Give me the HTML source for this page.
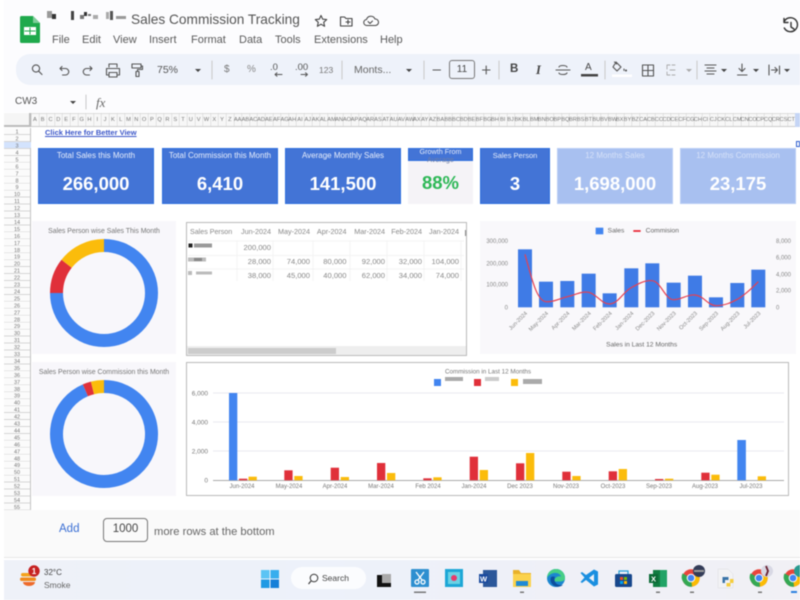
<!DOCTYPE html>
<html><head><meta charset="utf-8"><title>Sales Commission Tracking</title>
<style>
html,body{margin:0;padding:0;background:#fff;width:800px;height:600px;overflow:hidden}
#r{position:absolute;left:0;top:0;width:800px;height:600px;overflow:hidden;font-family:"Liberation Sans",sans-serif;color:#444;filter:blur(.5px);background:#fff}
#r div,#r span.a{position:absolute}
.t{white-space:nowrap;line-height:1}
.m{top:34.500px;font-size:11px;color:#5a5a5a}
.card{background:#4374d6;border:1px solid #2f6fde;box-sizing:border-box;top:148px;height:56px;color:#e8eefb;text-align:center}
.card b{position:absolute;left:0;right:0;top:25px;font-size:18.500px;line-height:20px;color:#fff}
.card span{position:absolute;left:0;right:0;top:2px;font-size:8px;line-height:10px;white-space:nowrap}
.lt{background:#a8c0f0;border-color:#b8cdf5;color:#d6e1f8}
#cols{left:31px;top:113px;width:769px;height:14px;overflow:hidden;display:flex;font-size:5.700px;line-height:14px;color:#777;
 background:repeating-linear-gradient(90deg,#d0d0d0 0,#d0d0d0 .5px,transparent .5px,transparent 7.800px)}
#cols i{font-style:normal;flex:0 0 7.800px;width:7.800px;text-align:center;white-space:nowrap}
svg{position:absolute;left:0;top:0}
</style></head><body><div id="r">
<div style="left:4px;top:0;width:796px;height:112px;background:#fcfcfe"></div>
<div style="left:16px;top:54px;width:784px;height:31px;background:#eef2fa;border-radius:14px 0 0 14px"></div>
<div class="t" style="left:131px;top:13px;font-size:13.700px;color:#555">Sales Commission Tracking</div>
<div class="t m" style="left:52px">File</div><div class="t m" style="left:82px">Edit</div><div class="t m" style="left:113px">View</div><div class="t m" style="left:149px">Insert</div><div class="t m" style="left:191px">Format</div><div class="t m" style="left:239px">Data</div><div class="t m" style="left:275px">Tools</div><div class="t m" style="left:314px">Extensions</div><div class="t m" style="left:380px">Help</div>
<div class="t" style="left:157px;top:65px;font-size:10.500px;color:#555">75%</div>
<div class="t" style="left:224px;top:65px;font-size:10px;color:#777">$</div>
<div class="t" style="left:247px;top:65px;font-size:10px;color:#888">%</div>
<div class="t" style="left:270px;top:63px;font-size:9.500px;color:#555">.0</div>
<div class="t" style="left:295px;top:63px;font-size:9.500px;color:#555">.00</div>
<div class="t" style="left:319px;top:66px;font-size:8.500px;color:#777">123</div>
<div class="t" style="left:354px;top:65px;font-size:10.500px;color:#666">Monts...</div>
<div class="t" style="left:449px;top:60px;width:24px;height:17px;border:1px solid #777;border-radius:3px;font-size:10px;line-height:17px;text-align:center;color:#444">11</div>
<div class="t" style="left:510px;top:64px;font-size:11.500px;font-weight:bold;color:#444">B</div>
<div class="t" style="left:536px;top:63.500px;font-size:12.500px;font-style:italic;font-family:'Liberation Serif',serif;font-weight:bold;color:#444">I</div>
<div class="t" style="left:585px;top:63px;font-size:10px;color:#444">A</div>
<div class="t" style="left:15px;top:97px;font-size:10px;color:#555">CW3</div>
<div class="t" style="left:96px;top:96px;font-size:13px;font-style:italic;font-family:'Liberation Serif',serif;color:#666">fx</div>

<div style="left:4px;top:113px;width:796px;height:14px;background:#f7f7f7;border-top:1px solid #ddd;border-bottom:1px solid #ccc;box-sizing:border-box"></div>
<div style="left:4px;top:113px;width:27px;height:14px;border-right:2px solid #bbb;border-bottom:2px solid #bbb;box-sizing:border-box;background:#f5f5f5"></div>
<div id="cols"><i>A</i><i>B</i><i>C</i><i>D</i><i>E</i><i>F</i><i>G</i><i>H</i><i>I</i><i>J</i><i>K</i><i>L</i><i>M</i><i>N</i><i>O</i><i>P</i><i>Q</i><i>R</i><i>S</i><i>T</i><i>U</i><i>V</i><i>W</i><i>X</i><i>Y</i><i>Z</i><i>AA</i><i>AB</i><i>AC</i><i>AD</i><i>AE</i><i>AF</i><i>AG</i><i>AH</i><i>AI</i><i>AJ</i><i>AK</i><i>AL</i><i>AM</i><i>AN</i><i>AO</i><i>AP</i><i>AQ</i><i>AR</i><i>AS</i><i>AT</i><i>AU</i><i>AV</i><i>AW</i><i>AX</i><i>AY</i><i>AZ</i><i>BA</i><i>BB</i><i>BC</i><i>BD</i><i>BE</i><i>BF</i><i>BG</i><i>BH</i><i>BI</i><i>BJ</i><i>BK</i><i>BL</i><i>BM</i><i>BN</i><i>BO</i><i>BP</i><i>BQ</i><i>BR</i><i>BS</i><i>BT</i><i>BU</i><i>BV</i><i>BW</i><i>BX</i><i>BY</i><i>BZ</i><i>CA</i><i>CB</i><i>CC</i><i>CD</i><i>CE</i><i>CF</i><i>CG</i><i>CH</i><i>CI</i><i>CJ</i><i>CK</i><i>CL</i><i>CM</i><i>CN</i><i>CO</i><i>CP</i><i>CQ</i><i>CR</i><i>CS</i><i>CT</i><i>CU</i><i>CV</i><i>CW</i></div>
<div style="left:795px;top:113px;width:5px;height:14px;background:#c5d5f5"></div>
<div style="left:4px;top:128px;width:27px;height:382px;background:repeating-linear-gradient(180deg,#fbfbfb 0,#fbfbfb 6.200px,#d6d6d6 6.200px,#d6d6d6 6.950px);border-right:1px solid #c4c4c4;box-sizing:border-box"></div>
<div style="left:4px;top:142px;width:27px;height:6px;background:#d3e3fd"></div>
<div class="t" style="left:45px;top:129px;font-size:7.500px;font-weight:bold;color:#3a55c8;text-decoration:underline">Click Here for Better View</div>
<div style="left:796px;top:141px;width:4px;height:6px;border:1px solid #2f5fd0;box-sizing:border-box"></div>

<div class="card" style="left:38px;width:116px"><span>Total Sales this Month</span><b>266,000</b></div>
<div class="card" style="left:162px;width:116px"><span>Total Commission this Month</span><b>6,410</b></div>
<div class="card" style="left:285px;width:116px"><span>Average Monthly Sales</span><b>141,500</b></div>
<div style="left:408px;top:148px;width:65px;height:56px;background:#f5f3f7"></div>
<div style="left:408px;top:148px;width:65px;height:13px;background:#4374d6;border:1px solid #2f6fde;box-sizing:border-box"></div>
<div style="left:408px;top:147.500px;width:65px;text-align:center;font-size:7.200px;line-height:8.500px;color:#e6ecfa">Growth From<br><span style="color:#6f7fa8">Average</span></div>
<div class="t" style="left:408px;top:174px;width:65px;text-align:center;font-size:18.500px;font-weight:bold;color:#2eb857">88%</div>
<div class="card" style="left:480px;width:70px"><span style="font-size:7.500px">Sales Person</span><b>3</b></div>
<div class="card lt" style="left:557px;width:116px"><span>12 Months Sales</span><b>1,698,000</b></div>
<div class="card lt" style="left:680px;width:116px"><span>12 Months Commission</span><b>23,175</b></div>

<div style="left:32px;top:221px;width:144px;height:133px;background:#f8f7fb"></div>
<div style="left:32px;top:362px;width:144px;height:134px;background:#f8f7fb"></div>
<div style="left:480px;top:221px;width:316px;height:133px;background:#f9f8fb"></div>
<div style="left:186px;top:222px;width:281px;height:134px;border:1px solid #bbb;box-sizing:border-box;background:#fff"></div>
<div style="left:186px;top:362px;width:603px;height:134px;border:1px solid #bbb;box-sizing:border-box;background:#fff"></div>

<div style="left:4px;top:510px;width:796px;height:47px;background:#fafafa;border-bottom:1px solid #e6e6e6"></div>
<div class="t" style="left:59px;top:524px;font-size:11.500px;color:#3b6fd4">Add</div>
<div class="t" style="left:103px;top:518px;width:45px;height:24px;border:1px solid #777;border-radius:4px;box-sizing:border-box;text-align:center;font-size:11.500px;line-height:21px;color:#444">1000</div>
<div class="t" style="left:154px;top:527px;font-size:11.200px;color:#666">more rows at the bottom</div>

<div style="left:4px;top:560px;width:796px;height:40px;background:linear-gradient(90deg,#eef1f8,#edf1fa 40%,#f1f0f5)"></div>
<div class="t" style="left:44px;top:569px;font-size:8px;color:#444">32°C</div>
<div class="t" style="left:44px;top:581px;font-size:8.500px;color:#666">Smoke</div>
<div style="left:291px;top:567px;width:75px;height:22px;border-radius:11px;background:#fbfcfe"></div>
<div class="t" style="left:322px;top:574px;font-size:8.500px;color:#444">Search</div>

<svg width="800" height="600" viewBox="0 0 800 600">
<!-- sheets logo -->
<path d="M20 17.500a1.500 1.500 0 0 1 1.500-1.500H33l7 7v18.500a1.500 1.500 0 0 1-1.500 1.500h-17a1.500 1.500 0 0 1-1.500-1.500z" fill="#1fa94c"/>
<path d="M33 16l7 7h-7z" fill="#7fce9a"/>
<rect x="24" y="27" width="12" height="8" fill="#fff"/><path d="M24.500 31h11M30 27.500v7" stroke="#1fa94c" stroke-width="1"/>
<g fill="#777"><rect x="47" y="11" width="5" height="7" fill="#999"/><rect x="52" y="14" width="4" height="5" fill="#333"/><rect x="71" y="11" width="3" height="9" fill="#444"/><rect x="80" y="15" width="4" height="4"/><rect x="84" y="12" width="3" height="4" fill="#333"/><rect x="88" y="14" width="3" height="2"/><rect x="93" y="15" width="5" height="4" fill="#aaa"/><rect x="106" y="12" width="3" height="7" fill="#aaa"/><rect x="110" y="11" width="3" height="9" fill="#555"/><rect x="116" y="16" width="10" height="3" fill="#999"/></g>
<!-- title icons -->
<g fill="none" stroke="#444" stroke-width="1.100" stroke-linejoin="round" stroke-linecap="round">
<path d="M321 15.500l1.700 3.700 4 .4-3 2.700.9 4-3.600-2.100-3.600 2.100.9-4-3-2.700 4-.4z"/>
<path d="M340.500 17h4l1.500 1.500h6v7.500h-11.500zM346 22h4M348 20v4"/>
<path d="M367 25.500a3 3 0 0 1-.5-6 4.500 4.500 0 0 1 8.500-.5 3.200 3.200 0 0 1 .5 6.500zM368 21.500l2 2 2.500-2.500" stroke-width="1"/>
<path d="M784 22a7 7 0 1 1 .3 6M784 18.500v4h4M791 22.500v4.500l3 2" stroke="#333" stroke-width="1.400"/>
</g>
<!-- toolbar icons -->
<g fill="none" stroke="#555" stroke-width="1.100" stroke-linecap="round" stroke-linejoin="round">
<circle cx="36" cy="68.500" r="3.600"/><path d="M38.700 71.200l3.300 3.300"/>
<path d="M60 68.500h5.500a3 3 0 0 1 0 6.500h-3M60 68.500l2-2M60 68.500l2 2"/>
<path d="M92 68.500h-5.500a3 3 0 0 0 0 6.500h3M92 68.500l-2-2M92 68.500l-2 2"/>
<path d="M109 67v-3h8v3M108 75h-1.500v-6.500h13V75H118M109 72.500h8v4.500h-8z"/>
<path d="M132 64h9v4h-9zM141 66h1.500v3.500h-5v2M136 71.500h3v5h-3z"/>
<path d="M424 61v18M212 61v18M342 61v18M499 61v18M605 61v18M697 61v18" stroke="#ccc"/>
<path d="M433 70h7.500M482.500 70h7.500M486.200 66v8"/>
<path d="M275 74.500h7M277 72.800l-2 1.700 2 1.700M301 74.500h6.500M305.500 72.800l2 1.700-2 1.700" stroke-width="1"/>
<path d="M556 70h14M559 67c.5-2 7-2 8 0M559 73c.5 2 7 2 8 0"/>
<path d="M616 62l5 5-4 4-4-4zM614.500 62l2 2M624 69v1.500"/>
<path d="M642.500 65h11v11h-11zM642.500 70.500h11M648 65v11"/>
<path d="M667 65h3m2 0h3M667 75h3m2 0h3M667 65v4M667 72v3M670 70h5" stroke="#aaa" stroke-width=".9"/>
<path d="M705 65h11M707 68h7M705 71h11M707 74h7" stroke-width="1.100"/>
<path d="M742 64v7M739 68.500l3 3 3-3M737.500 75h9.500"/>
<path d="M769 65v10M771.500 70h6M775 67.500l2.500 2.500-2.500 2.500M779.500 66v8"/>
<path d="M86 95v14" stroke="#ccc"/>
</g>
<rect x="581" y="74" width="17" height="2.500" fill="#444"/>
<rect x="612" y="74.500" width="20" height="2.500" fill="#fff"/>
<g fill="#444"><path d="M195 69h6l-3 3zM406 69h6l-3 3zM70 101h6l-3 3zM721 69h6l-3 3zM753 69h6l-3 3zM784 69h6l-3 3z"/><path d="M686 69h6l-3 3z" fill="#aaa"/><circle cx="626" cy="70.500" r="1"/></g>

<!-- row numbers -->
<g font-size="5.500" fill="#777" text-anchor="middle" transform="translate(17,2)">
<text y="131.600">1</text><text y="138.600">2</text><text y="145.500">3</text><text y="152.500">4</text><text y="159.400">5</text><text y="166.400">6</text><text y="173.300">7</text><text y="180.300">8</text><text y="187.200">9</text><text y="194.200">10</text><text y="201.100">11</text><text y="208.100">12</text><text y="215">13</text><text y="222">14</text><text y="228.900">15</text><text y="235.900">16</text><text y="242.800">17</text><text y="249.800">18</text><text y="256.700">19</text><text y="263.700">20</text><text y="270.600">21</text><text y="277.600">22</text><text y="284.500">23</text><text y="291.500">24</text><text y="298.400">25</text><text y="305.400">26</text><text y="312.300">27</text><text y="319.300">28</text><text y="326.200">29</text><text y="333.200">30</text><text y="340.100">31</text><text y="347.100">32</text><text y="354">33</text><text y="361">34</text><text y="367.900">35</text><text y="374.900">36</text><text y="381.800">37</text><text y="388.800">38</text><text y="395.700">39</text><text y="402.700">40</text><text y="409.600">41</text><text y="416.600">42</text><text y="423.500">43</text><text y="430.500">44</text><text y="437.400">45</text><text y="444.400">46</text><text y="451.300">47</text><text y="458.300">48</text><text y="465.200">49</text><text y="472.200">50</text><text y="479.100">51</text><text y="486.100">52</text><text y="493">53</text><text y="500">54</text><text y="506.900">55</text>
</g>

<!-- donut 1 -->
<text x="104" y="233" font-size="6.900" fill="#777" text-anchor="middle">Sales Person wise Sales This Month</text>
<g fill="none" stroke-width="13">
<path d="M104 245.500A47.500 47.500 0 1 1 56.500 293" stroke="#4285f0"/>
<path d="M56.500 293A47.500 47.500 0 0 1 66.600 263.800" stroke="#e0303a"/>
<path d="M66.600 263.800A47.500 47.500 0 0 1 104 245.500" stroke="#fbbc0b"/>
</g>
<!-- donut 2 -->
<text x="104" y="374" font-size="6.900" fill="#777" text-anchor="middle">Sales Person wise Commission this Month</text>
<g fill="none" stroke-width="13">
<path d="M104 386.500A47.500 47.500 0 1 1 85.400 390.300" stroke="#4285f0"/>
<path d="M85.400 390.300A47.500 47.500 0 0 1 92.500 387.900" stroke="#e0303a"/>
<path d="M92.500 387.900A47.500 47.500 0 0 1 104 386.500" stroke="#fbbc0b"/>
</g>

<!-- table -->
<g stroke="#f0f0f0" stroke-width=".7">
<path d="M188 241H464M188 255.500H464M188 269H464M237 241V281M273 241V281M313 241V281M350 241V281M387 241V281M424 241V281M461 241V281"/>
</g>
<g font-size="7.600" fill="#888">
<text x="190" y="234" font-size="7.100">Sales Person</text>
<g text-anchor="end"><text x="271" y="234" font-size="7.200">Jun-2024</text><text x="310" y="234" font-size="7.200">May-2024</text><text x="346.500" y="234" font-size="7.200">Apr-2024</text><text x="385" y="234" font-size="7.200">Mar-2024</text><text x="422" y="234" font-size="7.200">Feb-2024</text><text x="459" y="234" font-size="7.200">Jan-2024</text>
<text x="271" y="250">200,000</text>
<text x="271" y="264">28,000</text><text x="310" y="264">74,000</text><text x="346.500" y="264">80,000</text><text x="385" y="264">92,000</text><text x="422" y="264">32,000</text><text x="459" y="264">104,000</text>
<text x="271" y="278">38,000</text><text x="310" y="278">45,000</text><text x="346.500" y="278">40,000</text><text x="385" y="278">62,000</text><text x="422" y="278">34,000</text><text x="459" y="278">74,000</text></g>
</g>
<rect x="465" y="230" width="1" height="6" fill="#888"/>
<rect x="188.500" y="243.500" width="4" height="4" fill="#222"/><rect x="194" y="243.500" width="18" height="4" fill="#999"/>
<rect x="188" y="257.500" width="18" height="4" fill="#bbb"/><rect x="194" y="258" width="8" height="3" fill="#888"/>
<rect x="188" y="271" width="4" height="4" fill="#bbb"/><rect x="196" y="271.500" width="16" height="3" fill="#bbb"/>
<rect x="187" y="346" width="279" height="9" fill="#eee"/><rect x="188" y="348" width="148" height="6" fill="#ccc"/>

<!-- combo chart -->
<g transform="translate(475,215) scale(.3333)">
<rect x="362" y="38" width="23" height="20" fill="#4285f0"/>
<path d="M475 48h22" stroke="#e81c2c" stroke-width="5"/>
<g font-size="20" fill="#666"><text x="398" y="53">Sales</text><text x="512" y="53">Commision</text></g>
<g fill="#3f7be6">
<rect x="129" y="103" width="42" height="174"/><rect x="192" y="200" width="42" height="77"/><rect x="256" y="198" width="42" height="79"/><rect x="320" y="176" width="42" height="101"/><rect x="383" y="235" width="42" height="42"/><rect x="448" y="160" width="42" height="117"/><rect x="511" y="145" width="42" height="132"/><rect x="575" y="203" width="42" height="74"/><rect x="639" y="182" width="42" height="95"/><rect x="702" y="247" width="42" height="30"/><rect x="766" y="204" width="42" height="73"/><rect x="829" y="164" width="42" height="113"/>
</g>
<path d="M150 118C170 190,185 258,213 260C235 262,255 250,277 245C300 240,320 228,341 232C365 237,380 268,404 267C430 266,445 230,469 218C490 206,510 195,532 197C558 200,570 254,596 254C620 254,635 238,660 240C685 242,700 272,723 272C750 272,770 262,787 253C810 240,830 220,850 200" fill="none" stroke="#e8404f" stroke-width="3.500"/>
<g font-size="18" fill="#888" text-anchor="end"><text x="99" y="84">300,000</text><text x="99" y="151">200,000</text><text x="99" y="215">100,000</text><text x="99" y="283">0</text></g>
<g font-size="18" fill="#888"><text x="903" y="84">8,000</text><text x="903" y="134">6,000</text><text x="903" y="184">4,000</text><text x="903" y="233">2,000</text><text x="903" y="283">0</text></g>
<g font-size="17" fill="#888" text-anchor="end">
<text transform="translate(158,296) rotate(-45)">Jun-2024</text><text transform="translate(221,296) rotate(-45)">May-2024</text><text transform="translate(285,296) rotate(-45)">Apr-2024</text><text transform="translate(349,296) rotate(-45)">Mar-2024</text><text transform="translate(412,296) rotate(-45)">Feb-2024</text><text transform="translate(477,296) rotate(-45)">Jan-2024</text><text transform="translate(540,296) rotate(-45)">Dec-2023</text><text transform="translate(604,296) rotate(-45)">Nov-2023</text><text transform="translate(668,296) rotate(-45)">Oct-2023</text><text transform="translate(731,296) rotate(-45)">Sep-2023</text><text transform="translate(795,296) rotate(-45)">Aug-2023</text><text transform="translate(858,296) rotate(-45)">Jul-2023</text>
</g>
<text x="500" y="394" font-size="20" fill="#666" text-anchor="middle">Sales in Last 12 Months</text>
</g>

<!-- commission chart -->
<path d="M213 393H784M213 422H784M213 451H784" stroke="#e9e9ef" stroke-width="1"/>
<path d="M213 480.500H784" stroke="#aaa" stroke-width="1"/>
<g font-size="6.500" fill="#777" text-anchor="end"><text x="208" y="395.500">6,000</text><text x="208" y="424.500">4,000</text><text x="208" y="453.500">2,000</text><text x="208" y="482.500">0</text></g>
<text x="488" y="373.500" font-size="6.300" fill="#777" text-anchor="middle">Commission in Last 12 Months</text>
<rect x="434" y="379" width="7" height="7" fill="#4285f0"/><rect x="474" y="379" width="7" height="7" fill="#e0303a"/><rect x="511" y="379" width="7" height="7" fill="#fbbc0b"/>
<rect x="445" y="377" width="18" height="4" fill="#aaa"/><rect x="485" y="377" width="14" height="4" fill="#ccc"/><rect x="523" y="379" width="19" height="5" fill="#aaa"/>
<g fill="#4285f0"><rect x="229" y="393" width="8.300" height="87.300"/><rect x="737.300" y="440" width="8.600" height="40.300"/></g>
<g fill="#e0303a">
<rect x="239" y="478.700" width="8.300" height="1.600"/><rect x="284.300" y="470.300" width="8.300" height="10"/><rect x="330.700" y="467.700" width="8.300" height="12.600"/><rect x="377" y="463" width="8.300" height="17.300"/><rect x="423.300" y="478.300" width="8.300" height="2"/><rect x="469.700" y="456.700" width="8.300" height="23.600"/><rect x="516" y="463.300" width="8.300" height="17"/><rect x="562.300" y="471.700" width="8.300" height="8.600"/><rect x="608.700" y="471.300" width="8.300" height="9"/><rect x="655" y="479" width="8.300" height="1.300"/><rect x="701.300" y="472.700" width="8.300" height="7.600"/>
</g>
<g fill="#fbbc0b">
<rect x="248.500" y="476.700" width="8.300" height="3.600"/><rect x="294.300" y="476" width="8.300" height="4.300"/><rect x="340.700" y="477" width="8.300" height="3.300"/><rect x="387" y="473" width="8.300" height="7.300"/><rect x="433.300" y="477.300" width="8.300" height="3"/><rect x="479.700" y="470" width="8.300" height="10.300"/><rect x="526" y="453" width="8.300" height="27.300"/><rect x="572.300" y="476" width="8.300" height="4.300"/><rect x="618.700" y="469" width="8.300" height="11.300"/><rect x="665" y="478.700" width="8.300" height="1.600"/><rect x="711.300" y="474.700" width="8.300" height="5.600"/><rect x="757.700" y="476.300" width="8.300" height="4"/>
</g>
<g font-size="6" fill="#777" text-anchor="middle">
<text x="242" y="488">Jun-2024</text><text x="289" y="488">May-2024</text><text x="335" y="488">Apr-2024</text><text x="381" y="488">Mar-2024</text><text x="428" y="488">Feb 2024</text><text x="474" y="488">Jan-2024</text><text x="520" y="488">Dec 2023</text><text x="566" y="488">Nov-2023</text><text x="613" y="488">Oct-2023</text><text x="659" y="488">Sep-2023</text><text x="705" y="488">Aug-2023</text><text x="751" y="488">Jul-2023</text>
</g>

<!-- taskbar -->
<g fill="#f4a21c"><rect x="21" y="573" width="15" height="3.500" rx="1.700"/><rect x="20" y="577.500" width="16" height="3.500" rx="1.700" fill="#f08a1c"/><path d="M23 582h12a6 4 0 0 1-12 0z" fill="#ee6a2a"/></g>
<circle cx="34" cy="571" r="5.700" fill="#c62222"/><text x="34" y="573.800" font-size="8" font-weight="bold" fill="#fff" text-anchor="middle">1</text>
<g><rect x="261" y="570" width="8.500" height="8.500" fill="#5cc4f4"/><rect x="270.500" y="570" width="8.500" height="8.500" fill="#38aeee"/><rect x="261" y="579.500" width="8.500" height="8.500" fill="#1f9ae4"/><rect x="270.500" y="579.500" width="8.500" height="8.500" fill="#1680d8"/></g>
<circle cx="314" cy="578" r="3.800" fill="none" stroke="#333" stroke-width="1"/><path d="M311 581l-2.500 3" stroke="#333" stroke-width="1.100"/>
<rect x="377" y="575" width="14" height="12" fill="#111"/><rect x="382" y="574" width="9" height="9" fill="#aaa"/>

<rect x="411" y="569" width="18" height="18" rx="1" fill="#2e8fd0"/>
<g fill="none" stroke="#fff" stroke-width="1.300"><path d="M416 572l6 8M424 572l-6 8"/><circle cx="417" cy="582" r="2"/><circle cx="423" cy="582" r="2"/></g>
<rect x="445" y="569" width="18" height="18" fill="#1ca6d6"/><rect x="448" y="572" width="12" height="12" fill="#6ad2e4"/><circle cx="454" cy="578" r="3" fill="#e83a6a"/>
<rect x="483" y="570" width="14" height="17" fill="#2b579a"/><rect x="479" y="574" width="9" height="9" fill="#1a4a9e"/><text x="483.500" y="581.500" font-size="7.500" font-weight="bold" fill="#fff" text-anchor="middle">W</text>
<path d="M513 570h6l2 3h10v14h-18z" fill="#e8b12a"/><rect x="513" y="574" width="18" height="13" fill="#fbd24c"/><rect x="516" y="581" width="12" height="5" fill="#1e8ad6"/>
<circle cx="556" cy="578" r="9" fill="#1b86d0"/><path d="M556 569a9 9 0 0 1 9 9c0 2.500-2.500 3.500-5 3.500h-6c.5-4 4-6 7-5-1-3-5-4.500-9-3-3 1.200-4.500 3-5 5a9 9 0 0 1 9-9.500z" fill="#46cf86"/><path d="M551 577c-1.500 4 .5 8 5 9.500 2.500.5 5 0 7-1.500-3 .5-6-.2-7.500-2.500-1-1.500-1.500-3.500-.5-5.500-2 -.8-3.500-.5-4 .5z" fill="#0c4f9e"/>
<path d="M594 569.500l4 2v13l-4 2-8-6.500-4 3-1.500-1 4-4.500-4-4.500 1.500-1 4 3z" fill="#1a8fe0"/><path d="M594 574l-5 4 5 4z" fill="#eef1f8"/>
<rect x="615" y="574" width="17" height="13" rx="1.500" fill="#17478c"/><path d="M619 574v-3h9v3" fill="none" stroke="#25a0d8" stroke-width="1.200"/><rect x="620" y="577" width="3" height="3" fill="#f25022"/><rect x="624" y="577" width="3" height="3" fill="#7fba00"/><rect x="620" y="581" width="3" height="3" fill="#00a4ef"/><rect x="624" y="581" width="3" height="3" fill="#ffb900"/>
<rect x="653" y="570" width="14" height="17" fill="#107c41"/><rect x="660" y="570" width="7" height="17" fill="#21a366"/><rect x="649" y="574" width="9" height="9" fill="#0b6a35"/><text x="653.500" y="581.500" font-size="7.500" font-weight="bold" fill="#fff" text-anchor="middle">X</text>
<circle cx="691" cy="578" r="8.700" fill="#e8453c"/><path d="M691 578l7.500-4.300a8.700 8.700 0 0 1-6.500 13z" fill="#fbbc05"/><path d="M691 578l1 8.700a8.700 8.700 0 0 1-8.500-4.300 8.700 8.700 0 0 1-1-9z" fill="#34a853"/><circle cx="691" cy="578" r="4.300" fill="#fff"/><circle cx="691" cy="578" r="3.300" fill="#4285f4"/>
<circle cx="699" cy="571" r="6" fill="#333c58"/><rect x="694" y="570" width="10" height="2" fill="#999"/>
<path d="M718 569h10l5 5v14h-15z" fill="#f2f2f4" stroke="#dcdce0" stroke-width=".5"/><path d="M725 577h3.500v3h-3.500v3h-2.500v-6z" fill="#3a74a8"/><path d="M730 579h3.500v4h-3v3.500h-4v-3.500h3.500z" fill="#f5cd3c"/>
<circle cx="759" cy="578" r="8.700" fill="#e8453c"/><path d="M759 578l7.500-4.300a8.700 8.700 0 0 1-6.500 13z" fill="#fbbc05"/><path d="M759 578l1 8.700a8.700 8.700 0 0 1-8.500-4.300 8.700 8.700 0 0 1-1-9z" fill="#34a853"/><circle cx="759" cy="578" r="4.300" fill="#fff"/><circle cx="759" cy="578" r="3.300" fill="#4285f4"/>
<circle cx="767" cy="571" r="6" fill="#d8d8e4"/><path d="M766 566l2 5-2 5" stroke="#6a2030" stroke-width="1.800" fill="none"/>
<circle cx="793" cy="578" r="8.700" fill="#e8453c"/><path d="M793 578l7.500-4.300a8.700 8.700 0 0 1-6.500 13z" fill="#fbbc05"/><path d="M793 578l1 8.700a8.700 8.700 0 0 1-8.500-4.300 8.700 8.700 0 0 1-1-9z" fill="#34a853"/><circle cx="793" cy="578" r="4.300" fill="#fff"/><circle cx="793" cy="578" r="3.300" fill="#4285f4"/>
<circle cx="800" cy="571" r="6" fill="#2a9a90"/>
<g fill="#777"><rect x="414" y="591.500" width="12" height="1.500"/><rect x="520" y="591.500" width="4" height="1.500"/><rect x="656" y="591.500" width="4" height="1.500"/><rect x="690" y="591.500" width="4" height="1.500"/><rect x="758" y="591.500" width="4" height="1.500"/></g>
<rect x="791" y="591" width="6" height="2" fill="#2a80e0"/>
</svg>
</div></body></html>
